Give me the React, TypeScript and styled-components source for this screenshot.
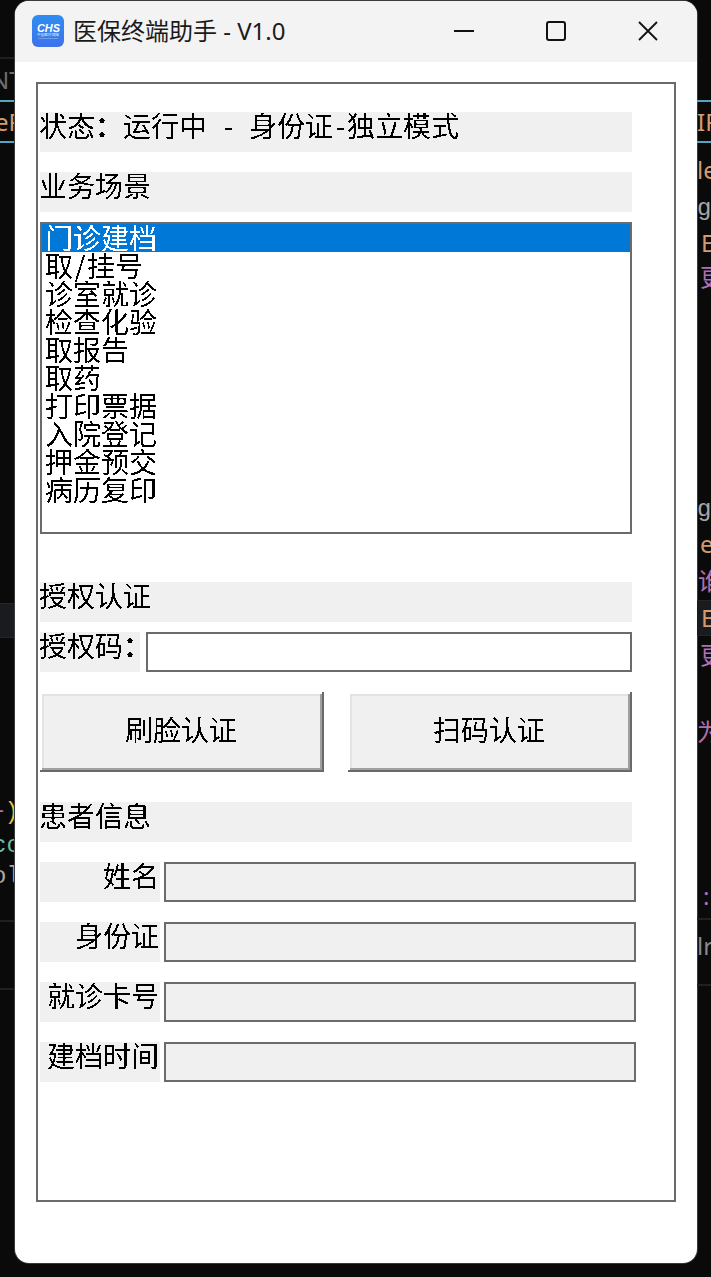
import React from "react";
import styled, { createGlobalStyle } from "styled-components";

const GlobalStyle = createGlobalStyle`
  html, body {
    margin: 0;
    padding: 0;
    background: #0a0a0a;
  }
`;

const CJK = `"Noto Sans CJK SC", sans-serif`;
const BORDER = "#6b6b6b";
const FILL = "#f0f0f0";

const ORANGE = "#d59a6e";
const GRAY = "#a8a8a8";
const PINK = "#b06fb0";
const TEAL = "#6fb8a8";
const CYAN = "#56a5c0";

const Desktop = styled.div`
  display: grid;
  grid-template-columns: 15px 682px 14px;
  width: 711px;
  height: 1277px;
  overflow: hidden;
  background: #0a0a0a;
`;

// bits of the editor that sit behind the window, only the edges show
const Strip = styled.div`
  display: flex;
  flex-direction: column;
  overflow: hidden;
  min-width: 0;
`;

const CodeLine = styled.div<{ $h: number; $color?: string; $mono?: boolean; $band?: boolean; $indent?: number }>`
  flex: none;
  display: flex;
  align-items: center;
  box-sizing: border-box;
  height: ${(p) => p.$h}px;
  margin-left: ${(p) => Math.min(p.$indent ?? 0, 0)}px;
  padding-left: ${(p) => Math.max(p.$indent ?? 0, 0)}px;
  color: ${(p) => p.$color ?? GRAY};
  background: ${(p) => (p.$band ? "#1a1b1e" : "transparent")};
  border-top: ${(p) => (p.$band ? "1px solid #262626" : "0")};
  border-bottom: ${(p) => (p.$band ? "1px solid #262626" : "0")};
  font: 24px/30px ${(p) => (p.$mono ? `"Liberation Mono", monospace` : `"Noto Sans", ${CJK}`)};
  white-space: pre;
`;

const Rule = styled.div<{ $h?: number; $color: string }>`
  flex: none;
  height: ${(p) => p.$h ?? 2}px;
  background: ${(p) => p.$color};
`;

const Yellow = styled.span`
  color: #e5c04a;
`;

const Window = styled.div`
  margin-top: 1px;
  height: 1262px;
  display: flex;
  flex-direction: column;
  background: #fff;
  border-radius: 14px;
  box-shadow: 0 0 0 1px #3a3a3a;
  overflow: hidden;
`;

const TitleBar = styled.div`
  flex: none;
  box-sizing: border-box;
  height: 61px;
  display: flex;
  align-items: center;
  background: #f3f3f3;
  padding: 0 3px 1px 17px;
`;

const AppIcon = styled.svg`
  flex: none;
  width: 32px;
  height: 32px;
`;

const AppTitle = styled.div`
  flex: 1;
  margin-left: 9px;
  font: 24px/32px "Noto Sans", ${CJK};
  color: #1a1a1a;
  white-space: pre;
`;

const WinButton = styled.div`
  flex: none;
  align-self: flex-start;
  width: 92px;
  height: 59px;
  display: flex;
  align-items: center;
  justify-content: center;
`;

const Body = styled.div`
  flex: 1;
  padding: 20px 21px 0;
`;

const Panel = styled.div`
  box-sizing: border-box;
  width: 640px;
  height: 1120px;
  border: 2px solid ${BORDER};
  padding: 28px 0 0 2px;
  font: 400 28px/28px ${CJK};
  color: #000;
`;

// thresholded through the #bitmap filter so the text has hard edges like the old bitmap font
const Crisp = styled.span`
  display: inline-block;
  filter: url(#bitmap);
  transform: translate(-1px, -1px);
  white-space: pre;
`;

const Colon = styled.span`
  font-weight: 700;
`;

const SectionLabel = styled.div<{ $top?: number }>`
  width: 592px;
  height: 40px;
  margin-top: ${(p) => p.$top ?? 0}px;
  background: ${FILL};
  white-space: pre;
`;

const HalfWidth = styled.span`
  display: inline-block;
  width: 14px;
  text-align: center;
`;

const ListBox = styled.ul`
  box-sizing: border-box;
  width: 592px;
  height: 312px;
  margin: 10px 0 0;
  padding: 0;
  list-style: none;
  border: 2px solid ${BORDER};
  background: #fff;
`;

const ListItem = styled.li<{ $selected?: boolean }>`
  height: 28px;
  padding-left: 4px;
  color: ${(p) => (p.$selected ? "#fff" : "#000")};
  background: ${(p) => (p.$selected ? "#0078d7" : "transparent")};
  white-space: pre;
`;

const Row = styled.div<{ $top: number; $gap: number }>`
  display: flex;
  gap: ${(p) => p.$gap}px;
  margin-top: ${(p) => p.$top}px;
`;

const FieldLabel = styled.div<{ $width: number; $right?: boolean }>`
  flex: none;
  width: ${(p) => p.$width}px;
  height: 40px;
  background: ${FILL};
  text-align: ${(p) => (p.$right ? "right" : "left")};
  white-space: nowrap;
`;

const Field = styled.div<{ $width: number; $readOnly?: boolean }>`
  box-sizing: border-box;
  flex: none;
  width: ${(p) => p.$width}px;
  height: 40px;
  border: 2px solid ${BORDER};
  background: ${(p) => (p.$readOnly ? FILL : "#fff")};
`;

const RaisedButton = styled.button`
  width: 284px;
  height: 80px;
  padding: 0 0 4px;
  border: 0;
  background: ${FILL};
  color: #000;
  font: inherit;
  box-shadow:
    inset -2px -2px 0 #696969,
    inset 2px 2px 0 #fff,
    inset -4px -4px 0 #a0a0a0,
    inset 4px 4px 0 #e3e3e3;
`;

const HiddenDefs = styled.svg`
  position: absolute;
  width: 0;
  height: 0;
`;

const SCENES = [
  "门诊建档",
  "取/挂号",
  "诊室就诊",
  "检查化验",
  "取报告",
  "取药",
  "打印票据",
  "入院登记",
  "押金预交",
  "病历复印",
];

const PATIENT_FIELDS = ["姓名", "身份证", "就诊卡号", "建档时间"];

const ChsLogo = () => (
  <AppIcon viewBox="0 0 32 32">
    <defs>
      <linearGradient id="chs" x1="0" y1="0" x2="0" y2="1">
        <stop offset="0" stopColor="#2e8df2" />
        <stop offset="1" stopColor="#3f71ea" />
      </linearGradient>
    </defs>
    <rect width="32" height="32" rx="6" fill="url(#chs)" />
    <text x="5" y="16.5" textLength="23" lengthAdjust="spacingAndGlyphs" fontFamily="Liberation Sans" fontSize="10" fontWeight="700" fontStyle="italic" fill="#fff">
      CHS
    </text>
    <text x="5" y="21" textLength="22" lengthAdjust="spacingAndGlyphs" fontFamily="Noto Sans CJK SC" fontSize="3.4" fill="#e6f0ff">
      中国医疗保障
    </text>
    <rect x="6" y="23" width="20" height="0.6" fill="#8fb6f5" />
  </AppIcon>
);

const App: React.FC = () => {
  return (
    <Desktop>
      <GlobalStyle />
      <HiddenDefs aria-hidden="true">
        <filter id="bitmap" x="-5%" y="-5%" width="110%" height="110%" colorInterpolationFilters="sRGB">
          <feComponentTransfer>
            <feFuncA type="discrete" tableValues="0 1" />
          </feComponentTransfer>
        </filter>
      </HiddenDefs>

      <Strip>
        <CodeLine $h={57} />
        <Rule $color="#1f1f1f" />
        <CodeLine $h={41} $color="#6e6e6e" $indent={-9}>NT</CodeLine>
        <Rule $color={CYAN} />
        <CodeLine $h={39} $color={ORANGE} $indent={-5}>eP</CodeLine>
        <Rule $color={CYAN} />
        <CodeLine $h={460} />
        <CodeLine $h={35} $band />
        <CodeLine $h={157} />
        <CodeLine $h={35} $color={PINK} $mono $indent={-10}>+<Yellow>)</Yellow></CodeLine>
        <CodeLine $h={32} $color={TEAL} $mono $indent={-8}>co</CodeLine>
        <CodeLine $h={30} $mono $indent={-8}>ol</CodeLine>
        <CodeLine $h={28} />
        <Rule $color="#202020" />
        <CodeLine $h={66} />
        <Rule $color="#202020" />
      </Strip>

      <Window>
        <TitleBar>
          <ChsLogo />
          <AppTitle>医保终端助手 - V1.0</AppTitle>
          <WinButton>
            <svg width="20" height="2" viewBox="0 0 20 2">
              <rect width="20" height="2" fill="#111" />
            </svg>
          </WinButton>
          <WinButton>
            <svg width="20" height="20" viewBox="0 0 20 20">
              <rect x="1" y="1" width="18" height="18" rx="2" fill="none" stroke="#111" strokeWidth="2" />
            </svg>
          </WinButton>
          <WinButton>
            <svg width="20" height="20" viewBox="0 0 20 20">
              <path d="M1 1 L19 19 M19 1 L1 19" fill="none" stroke="#111" strokeWidth="1.8" />
            </svg>
          </WinButton>
        </TitleBar>
        <Body>
          <Panel>
            <SectionLabel>
              <Crisp>
                状态<Colon>：</Colon>运行中<HalfWidth> </HalfWidth><HalfWidth>-</HalfWidth><HalfWidth> </HalfWidth>身份证<HalfWidth>-</HalfWidth>独立模式
              </Crisp>
            </SectionLabel>
            <SectionLabel $top={20}><Crisp>业务场景</Crisp></SectionLabel>
            <ListBox>
              {SCENES.map((scene, index) => (
                <ListItem key={scene} $selected={index === 0}>
                  <Crisp>
                    {scene.includes("/") ? (
                      <>
                        {scene.split("/")[0]}
                        <HalfWidth>/</HalfWidth>
                        {scene.split("/")[1]}
                      </>
                    ) : (
                      scene
                    )}
                  </Crisp>
                </ListItem>
              ))}
            </ListBox>
            <SectionLabel $top={48}><Crisp>授权认证</Crisp></SectionLabel>
            <Row $top={10} $gap={6}>
              <FieldLabel $width={100}><Crisp>授权码<Colon>：</Colon></Crisp></FieldLabel>
              <Field $width={486} />
            </Row>
            <Row $top={20} $gap={24}>
              <RaisedButton type="button"><Crisp>刷脸认证</Crisp></RaisedButton>
              <RaisedButton type="button"><Crisp>扫码认证</Crisp></RaisedButton>
            </Row>
            <SectionLabel $top={30}><Crisp>患者信息</Crisp></SectionLabel>
            {PATIENT_FIELDS.map((name) => (
              <Row key={name} $top={20} $gap={4}>
                <FieldLabel $width={120} $right><Crisp>{name}</Crisp></FieldLabel>
                <Field $width={472} $readOnly />
              </Row>
            ))}
          </Panel>
        </Body>
      </Window>

      <Strip>
        <CodeLine $h={100} />
        <Rule $color={CYAN} />
        <CodeLine $h={39} $color={ORANGE}>IP</CodeLine>
        <Rule $color={CYAN} />
        <CodeLine $h={7} />
        <CodeLine $h={40} $color={ORANGE}>le</CodeLine>
        <CodeLine $h={37} $mono>g:</CodeLine>
        <CodeLine $h={31} $color={ORANGE} $indent={4}>E</CodeLine>
        <CodeLine $h={38} $color={PINK} $indent={3}>更</CodeLine>
        <CodeLine $h={197} />
        <CodeLine $h={33} $mono>g:</CodeLine>
        <CodeLine $h={36} $color={ORANGE} $indent={3}>e</CodeLine>
        <CodeLine $h={38} $color={PINK} $indent={1}>谁</CodeLine>
        <CodeLine $h={36} $color={ORANGE} $band $indent={4}>E</CodeLine>
        <CodeLine $h={38} $color={PINK} $indent={3}>更</CodeLine>
        <CodeLine $h={40} />
        <CodeLine $h={36} $color={PINK}>为</CodeLine>
        <CodeLine $h={128} />
        <CodeLine $h={36} $color={PINK} $indent={6}>:</CodeLine>
        <CodeLine $h={4} />
        <Rule $color="#202020" />
        <CodeLine $h={8} />
        <CodeLine $h={36} $color="#8a8a8a">lr</CodeLine>
        <CodeLine $h={20} />
        <Rule $color="#202020" />
      </Strip>
    </Desktop>
  );
};

export default App;
